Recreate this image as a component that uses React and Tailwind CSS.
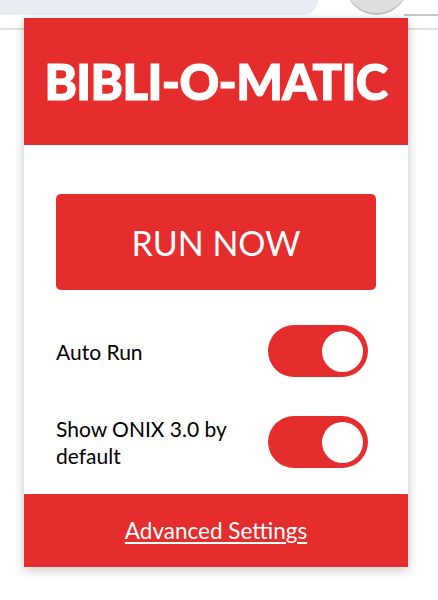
import React, { useState } from 'react';

function Toggle({ on, onChange }) {
  return (
    <button
      type="button"
      onClick={() => onChange(!on)}
      className={`flex h-[52px] w-[100px] shrink-0 items-center rounded-full px-[5px] ${on ? 'justify-end bg-[#e52d2e]' : 'justify-start bg-gray-300'}`}
    >
      <span className="block h-[41px] w-[41px] rounded-full bg-white" />
    </button>
  );
}

export default function App() {
  const [autoRun, setAutoRun] = useState(true);
  const [onix, setOnix] = useState(true);

  return (
    <div className="relative h-[600px] w-[438px] overflow-hidden bg-white font-['Lato',sans-serif]">
      {/* browser chrome behind the popup */}
      <div className="absolute left-0 top-0 h-[15px] w-[318px] rounded-br-[16px] bg-[#e9edf6]" />
      <div className="absolute left-[345px] top-[-48px] h-[63px] w-[63px] rounded-full border-b-2 border-[#bdbdbd] bg-[#dedede]" />
      <div className="absolute left-[404px] top-[14px] h-[2px] w-[34px] bg-[#c4c4c4]" />
      <div className="absolute left-0 top-[28px] h-[2px] w-full bg-[#e3e3e3]" />

      <div className="relative ml-[24px] mt-[18px] w-[384px] bg-white shadow-[0_3px_10px_rgba(0,0,0,0.22)]">
        <div className="flex h-[127px] items-center justify-center bg-[#e52d2e]">
          <h1 className="text-[49px] font-black tracking-[-0.6px] text-white [-webkit-text-stroke:1.2px_white]">BIBLI-O-MATIC</h1>
        </div>

        <div className="px-[32px] pb-[25px] pt-[49px]">
          <button className="flex h-[96px] w-full items-center justify-center rounded-[5px] bg-[#e52d2e] text-[34px] text-white">
            RUN NOW
          </button>

          <div className="mt-[35px] flex items-center gap-4 pr-[8px]">
            <span className="flex-1 text-[21px] leading-[27px] text-black">Auto Run</span>
            <Toggle on={autoRun} onChange={setAutoRun} />
          </div>

          <div className="mt-[38px] flex items-center gap-4 pr-[8px]">
            <span className="flex-1 text-[21px] leading-[27px] text-black">Show ONIX 3.0 by default</span>
            <Toggle on={onix} onChange={setOnix} />
          </div>
        </div>

        <div className="flex h-[73px] items-center justify-center bg-[#e52d2e]">
          <a href="#" className="text-[22.5px] text-white underline decoration-[1.5px] underline-offset-[3px]">Advanced Settings</a>
        </div>
      </div>
    </div>
  );
}
